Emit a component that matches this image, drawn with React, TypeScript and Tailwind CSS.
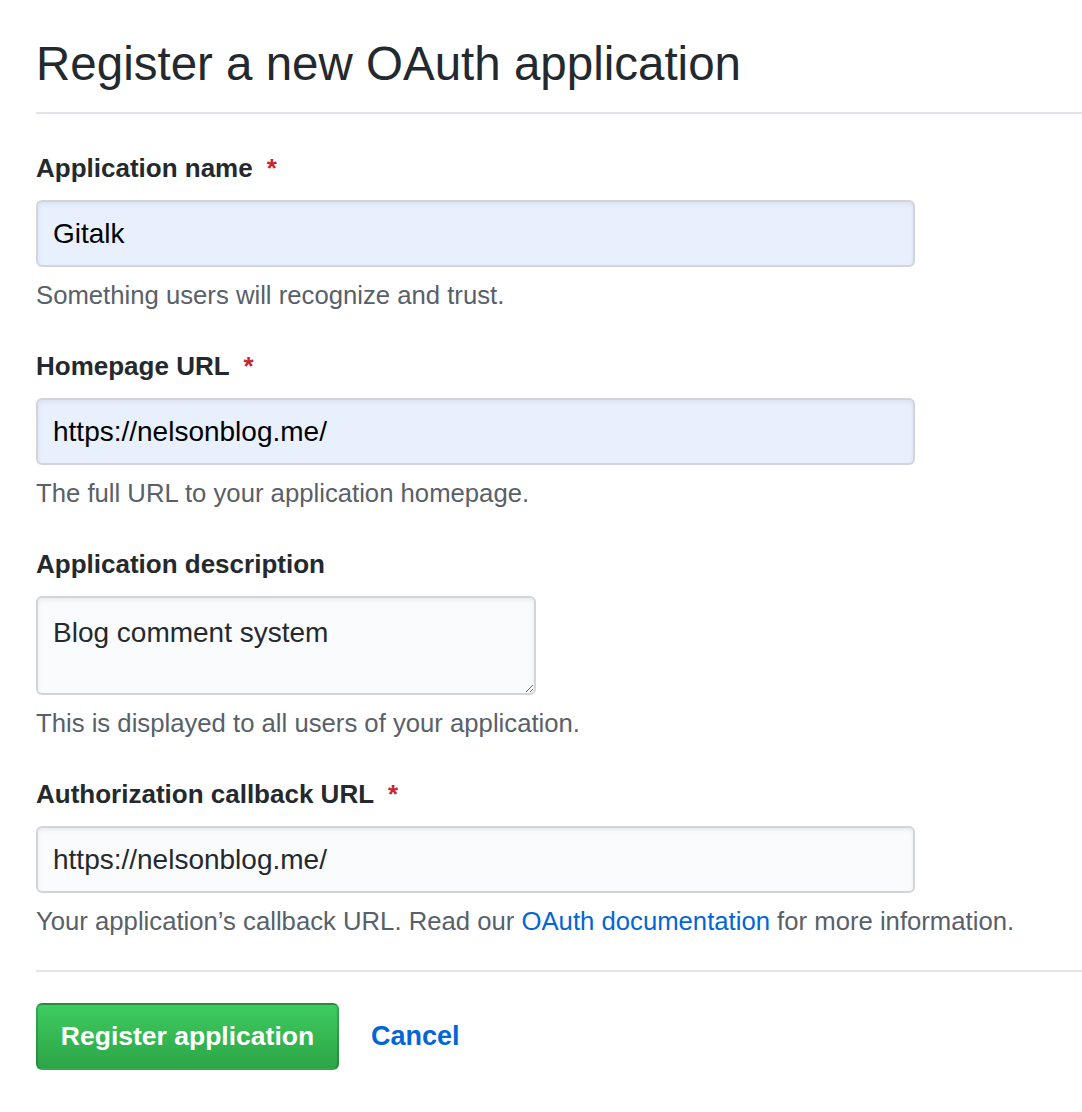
const font = "font-['Liberation_Sans',Arial,sans-serif]";

interface FieldProps {
  label: string;
  required?: boolean;
  note: React.ReactNode;
  children: React.ReactNode;
}

const Field = ({ label, required, note, children }: FieldProps) => {
  return (
    <div className="flex flex-col">
      <label className="text-[26px] leading-[36px] font-bold text-[#24292e] flex items-center">
        {label}
        {required && <span className="ml-[14px] text-[#cb2431]">*</span>}
      </label>
      <div className="mt-[14px]">{children}</div>
      <p className="mt-[10px] text-[25.7px] leading-[36px] text-[#586069]">{note}</p>
    </div>
  );
};

const inputBase =
  "h-[67px] w-[879px] rounded-[6px] border-2 border-[#d1d5da] px-[15px] text-[28px] outline-none shadow-[inset_0_2px_4px_rgba(27,31,35,0.075)]";

export default function App() {
  return (
    <div className={`${font} min-h-[1112px] bg-white pl-[36px] pt-[36px]`}>
      <h1 className="text-[47.5px] leading-[56px] font-normal text-[#24292e] pb-[20px] border-b-2 border-[#e1e4e8]">
        Register a new OAuth application
      </h1>

      <div className="flex flex-col gap-[35px] pt-[36px]">
        <Field label="Application name" required note="Something users will recognize and trust.">
          <input readOnly value="Gitalk" className={`${inputBase} bg-[#e8f0fe] text-black`} />
        </Field>

        <Field label="Homepage URL" required note="The full URL to your application homepage.">
          <input readOnly value="https://nelsonblog.me/" className={`${inputBase} bg-[#e8f0fe] text-black`} />
        </Field>

        <Field label="Application description" note="This is displayed to all users of your application.">
          <textarea
            readOnly
            defaultValue="Blog comment system"
            className="block h-[99px] w-[500px] rounded-[6px] border-2 border-[#d1d5da] bg-[#fafbfc] px-[15px] py-[15px] text-[28px] leading-[40px] text-[#24292e] outline-none shadow-[inset_0_2px_4px_rgba(27,31,35,0.075)]"
          />
        </Field>

        <Field
          label="Authorization callback URL"
          required
          note={
            <>
              Your application’s callback URL. Read our{" "}
              <a href="#" className="text-[#0366d6]">OAuth documentation</a> for more information.
            </>
          }
        >
          <input readOnly value="https://nelsonblog.me/" className={`${inputBase} bg-[#fafbfc] text-[#24292e]`} />
        </Field>
      </div>

      <div className="mt-[31px] border-t-2 border-[#e1e4e8] pt-[31px] flex items-center gap-[32px]">
        <button className="h-[67px] w-[303px] rounded-[6px] border-2 border-[rgba(27,31,35,0.2)] bg-linear-to-b from-[#3fcb5e] to-[#2ca548] text-white text-[26.5px] font-bold">
          Register application
        </button>
        <a href="#" className="text-[27px] font-bold text-[#0366d6]">Cancel</a>
      </div>
    </div>
  );
}
